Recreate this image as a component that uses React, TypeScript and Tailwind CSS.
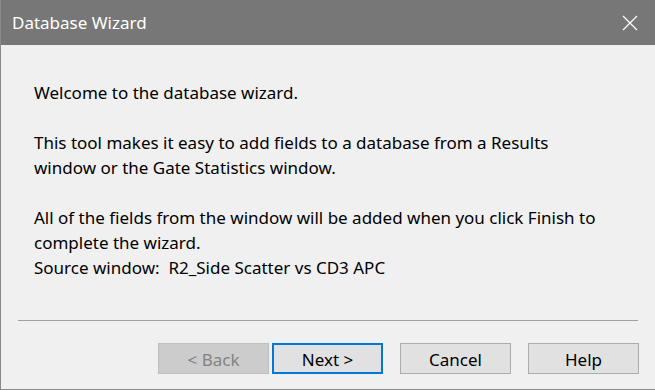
import React from "react";

const font = { fontFamily: '"Noto Sans", "Open Sans", sans-serif' };

function WizardButton({
  label,
  kind = "normal",
}: {
  label: string;
  kind?: "normal" | "default" | "disabled";
}) {
  const look =
    kind === "disabled"
      ? "bg-[#cccccc] border border-[#bfbfbf] text-[#838383]"
      : kind === "default"
      ? "bg-[#e1e1e1] border-2 border-[#0078d7] text-black"
      : "bg-[#e1e1e1] border border-[#adadad] text-black";
  return (
    <button
      className={`w-[111px] h-[31px] flex items-center justify-center pt-[2px] text-[17px] leading-none ${look}`}
    >
      {label}
    </button>
  );
}

export default function App() {
  return (
    <div
      className="w-[655px] h-[390px] flex flex-col bg-[#f0f0f0] border-l border-b border-[#8a8a8a] overflow-hidden"
      style={font}
    >
      {/* Title bar */}
      <div className="h-[45px] shrink-0 bg-[#777777] flex items-center justify-between pl-[11px] pr-[17px]">
        <span className="text-white text-[17px]">Database Wizard</span>
        <svg width="16" height="16" viewBox="0 0 16 16">
          <path d="M1 1 L15 15 M15 1 L1 15" stroke="#ffffff" strokeWidth="1.2" />
        </svg>
      </div>

      {/* Body */}
      <div className="flex-1 pt-[35px] pl-[33px] text-[17px] leading-[25px] text-black">
        <p>Welcome to the database wizard.</p>
        <p className="mt-[25px]">
          This tool makes it easy to add fields to a database from a Results
          <br />
          window or the Gate Statistics window.
        </p>
        <p className="mt-[25px]">
          All of the fields from the window will be added when you click Finish to
          <br />
          complete the wizard.
        </p>
        <p>Source window:&nbsp; R2_Side Scatter vs CD3 APC</p>
      </div>

      {/* Footer */}
      <div className="shrink-0">
        <div className="mx-[17px] h-px bg-[#a0a0a0]" />
        <div className="flex justify-end pr-[16px] pt-[22px] pb-[15px]">
          <WizardButton label="< Back" kind="disabled" />
          <div className="ml-[3px]">
            <WizardButton label="Next >" kind="default" />
          </div>
          <div className="ml-[17px]">
            <WizardButton label="Cancel" />
          </div>
          <div className="ml-[17px]">
            <WizardButton label="Help" />
          </div>
        </div>
      </div>
    </div>
  );
}
